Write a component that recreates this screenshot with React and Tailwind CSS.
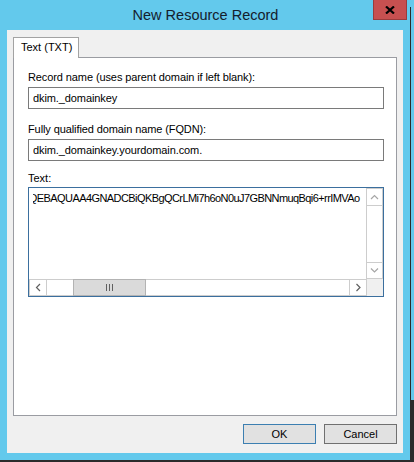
const font = { fontFamily: '"Liberation Sans", Arial, sans-serif' }

function Chevron({ dir, color }) {
  const paths = {
    up: 'M1 5 L4.5 1.5 L8 5',
    down: 'M1 1.5 L4.5 5 L8 1.5',
    left: 'M5 1 L1.5 4.5 L5 8',
    right: 'M1.5 1 L5 4.5 L1.5 8',
  }
  const vertical = dir === 'up' || dir === 'down'
  return (
    <svg width={vertical ? 9 : 7} height={vertical ? 7 : 9} viewBox={vertical ? '0 0 9 7' : '0 0 7 9'}>
      <path d={paths[dir]} fill="none" stroke={color} strokeWidth="1.2" />
    </svg>
  )
}

function Field({ label, value }) {
  return (
    <div className="flex flex-col">
      <label className="text-[11px] leading-[15px] tracking-[-0.1px] text-black">{label}</label>
      <input
        readOnly
        value={value}
        style={font}
        className="mt-[2px] h-[22px] w-full border border-[#7a7a7a] bg-white px-[4px] text-[11px] tracking-[-0.1px] text-black outline-none"
      />
    </div>
  )
}

export default function App() {
  return (
    <div className="h-[462px] w-[414px] overflow-hidden bg-[#2b2b2b] text-black" style={font}>
      <div className="flex h-[460px]">
        {/* Window */}
        <div className="flex w-[410px] flex-col bg-[#63c9ec]">
          {/* Title bar */}
          <div className="relative flex h-[30px] items-center justify-center">
            <span className="pl-[1px] text-[14.5px] leading-none text-[#14202c]">New Resource Record</span>
            <button className="absolute right-[3px] top-0 flex h-[20px] w-[34px] items-center justify-center border border-t-0 border-[#9a3c3c] bg-[#c75050]">
              <svg width="10" height="8" viewBox="0 0 10 8">
                <path d="M1 0.5 L9 7.5 M9 0.5 L1 7.5" stroke="#000" strokeWidth="2.2" />
              </svg>
            </button>
          </div>

          {/* Client area */}
          <div className="mx-[7px] flex h-[423px] flex-col bg-[#f0f0f0] px-[6px] pt-[7px]">
            {/* Tab strip */}
            <div className="flex h-[20px]">
              <div className="relative z-10 h-[21px] w-[66px] border border-b-0 border-[#a3a3a3] bg-white pl-[7px] text-[11px] leading-[19px]">
                Text (TXT)
              </div>
            </div>

            {/* Tab page */}
            <div className="flex h-[359px] flex-col border border-[#9a9ca2] bg-white pl-[14px] pr-[12px] pt-[12px]">
              <Field label="Record name (uses parent domain if left blank):" value="dkim._domainkey" />
              <div className="mt-[13px]">
                <Field label="Fully qualified domain name (FQDN):" value="dkim._domainkey.yourdomain.com." />
              </div>

              <div className="mt-[10px] flex flex-col">
                <span className="text-[11px] leading-[15px]">Text:</span>
                <div className="mt-[1px] flex h-[110px] flex-col border border-[#3b6f9e] bg-white">
                  <div className="flex h-[91px]">
                    <div className="ml-[4px] flex-1 overflow-hidden pt-[3px]">
                      <div className="-ml-[11.5px] whitespace-nowrap text-[11px] leading-[15px] tracking-[-0.58px]">
                        DQEBAQUAA4GNADCBiQKBgQCrLMi7h6oN0uJ7GBNNmuqBqi6+rrIMVAo
                      </div>
                    </div>
                    {/* Vertical scrollbar (disabled) */}
                    <div className="flex w-[17px] flex-col border-x border-t border-[#cdcdcd]">
                      <div className="flex h-[17px] items-center justify-center border-b border-[#cdcdcd]">
                        <Chevron dir="up" color="#a6a6a6" />
                      </div>
                      <div className="flex-1" />
                      <div className="flex h-[17px] items-center justify-center border-y border-[#cdcdcd]">
                        <Chevron dir="down" color="#a6a6a6" />
                      </div>
                    </div>
                  </div>
                  {/* Horizontal scrollbar */}
                  <div className="flex h-[17px]">
                    <div className="flex flex-1 border border-r-0 border-[#cdcdcd]">
                      <div className="flex w-[17px] items-center justify-center border-r border-[#cdcdcd]">
                        <Chevron dir="left" color="#606060" />
                      </div>
                      <div className="w-[26px]" />
                      <div className="-my-px flex w-[73px] items-center justify-center gap-[2px] border border-[#b3b3b3] bg-[#dadada]">
                        <span className="h-[7px] w-px bg-[#606060]" />
                        <span className="h-[7px] w-px bg-[#606060]" />
                        <span className="h-[7px] w-px bg-[#606060]" />
                      </div>
                      <div className="flex-1" />
                      <div className="flex w-[17px] items-center justify-center border-l border-[#cdcdcd]">
                        <Chevron dir="right" color="#606060" />
                      </div>
                    </div>
                    <div className="w-[17px] border-l border-[#cdcdcd] bg-[#f0f0f0]" />
                  </div>
                </div>
              </div>
            </div>

            {/* Buttons */}
            <div className="mt-[8px] flex justify-end gap-[8px]">
              <button className="h-[20px] w-[73px] border border-[#3c7fb1] bg-[#e1e1e1] text-[11px] text-black">OK</button>
              <button className="h-[20px] w-[73px] border border-[#707070] bg-[#e1e1e1] text-[11px] text-black">Cancel</button>
            </div>
          </div>
        </div>

        {/* Edge of the desktop behind */}
        <div className="flex w-[4px] flex-col">
          <div className="h-[7px] bg-[#63c9ec]" />
          <div className="flex h-[393px]">
            <div className="w-px bg-[#2b2b2b]" />
            <div className="flex-1 bg-[#63c9ec]" />
          </div>
        </div>
      </div>
    </div>
  )
}
